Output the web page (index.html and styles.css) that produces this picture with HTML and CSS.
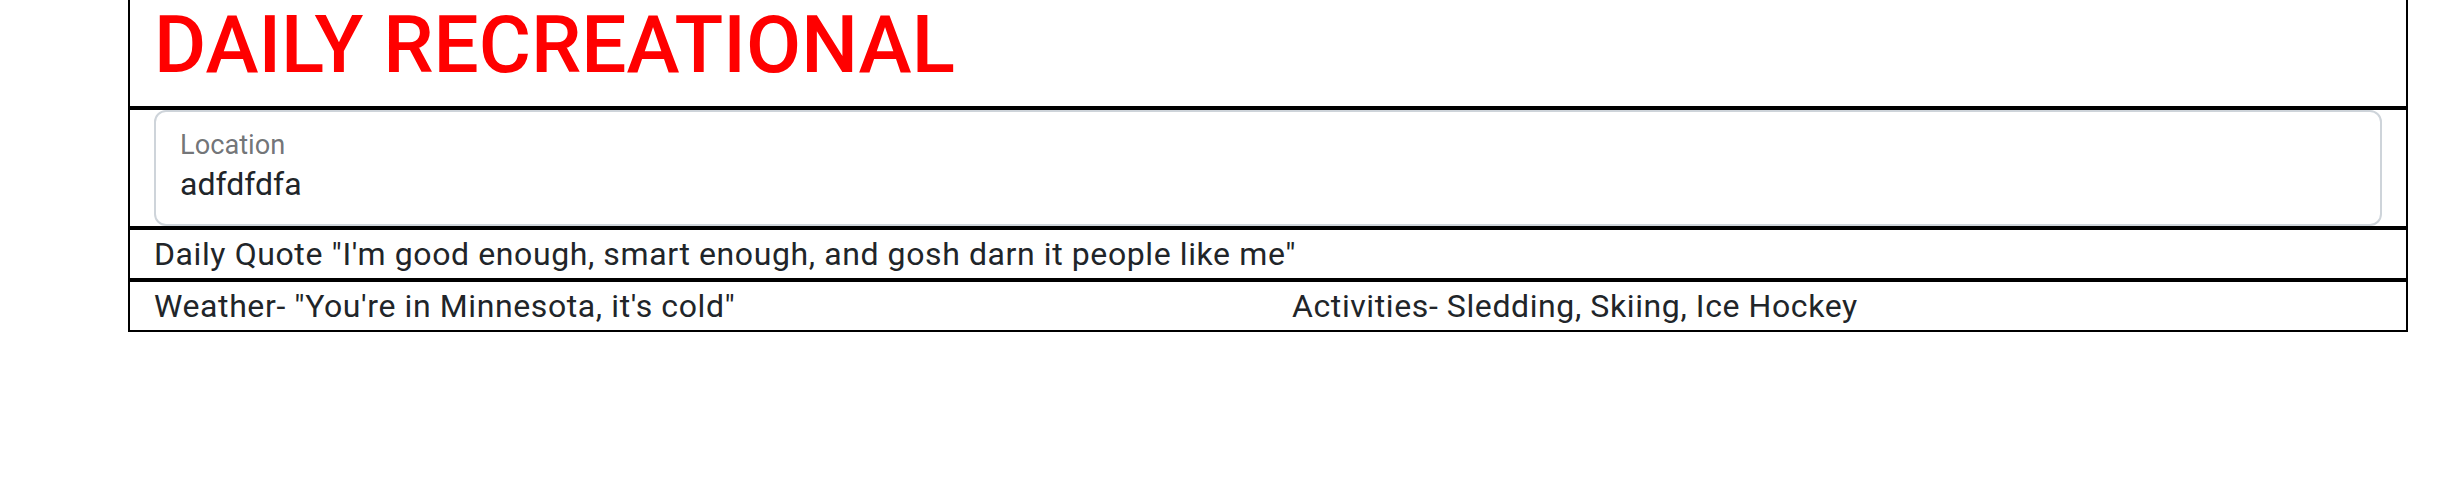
FILE: index.html
```html
<!DOCTYPE html>
<html lang="en">
<head>
    <meta charset="UTF-8">
    <meta name="viewport" content="width=device-width, initial-scale=1.0">
    <title>Daily Recreational</title>
    <link rel="stylesheet" href="styles.css">
</head>
<body>
    <div class="page">
        <header class="banner">
            <h1>DAILY RECREATIONAL</h1>
        </header>

        <form class="location-form">
            <div class="floating">
                <input type="text" id="location" name="location" value="adfdfdfa">
                <label for="location">Location</label>
            </div>
        </form>

        <div class="quote-row">Daily Quote "I'm good enough, smart enough, and gosh darn it people like me"</div>

        <div class="info-row">
            <div class="info-col">Weather- "You're in Minnesota, it's cold"</div>
            <div class="info-col">Activities- Sledding, Skiing, Ice Hockey</div>
        </div>
    </div>
</body>
</html>
```

FILE: styles.css
```css
body {
    margin: 0;
    font-family: Roboto, "Liberation Sans", Arial, sans-serif;
    color: #212529;
    background-color: #fff;
}

.page {
    width: 2280px;
    margin-left: 128px;
}

.banner {
    border: 2px solid #000;
    border-top: none;
    height: 108px;
    padding: 0 24px;
    box-sizing: border-box;
}

.banner h1 {
    margin: 0;
    font-size: 80px;
    line-height: 90px;
    font-weight: 500;
    color: #f00;
}

.location-form {
    border: 2px solid #000;
    padding: 0 24px;
    margin: 0;
}

.floating {
    position: relative;
}

.floating input {
    display: block;
    width: 100%;
    height: 116px;
    box-sizing: border-box;
    padding: 52px 24px 20px;
    border: 2px solid #ced4da;
    border-radius: 12px;
    font-family: inherit;
    font-size: 32px;
    line-height: 48px;
    color: #212529;
    background-color: #fff;
    outline: none;
}

.floating label {
    position: absolute;
    top: 15px;
    left: 26px;
    font-size: 27.2px;
    line-height: 40.8px;
    color: rgba(33, 37, 41, 0.65);
}

.quote-row, .info-row {
    border: 2px solid #000;
    font-size: 32px;
    line-height: 48px;
    letter-spacing: 0.6px;
}

.quote-row {
    padding: 0 24px;
}

.info-row {
    display: grid;
    grid-template-columns: 1fr 1fr;
}

.info-col {
    padding: 0 24px;
}
```
